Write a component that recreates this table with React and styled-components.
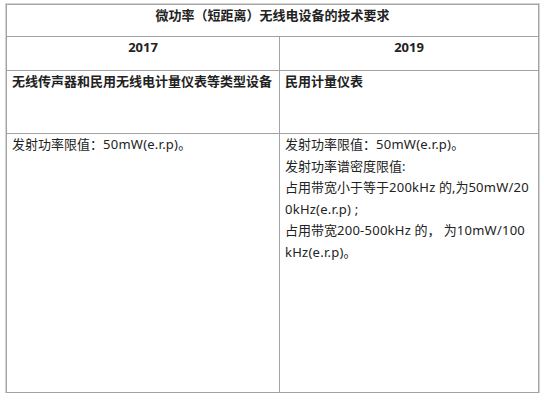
import React from "react";
import styled, { createGlobalStyle } from "styled-components";

const Global = createGlobalStyle`
  html, body { margin: 0; padding: 0; background: #fff; }
  body { font-family: "Noto Sans", "Noto Sans CJK SC", sans-serif; color: #222; }
`;

const Page = styled.div`
  padding: 4px 0 0 6px;
`;

const Table = styled.table`
  width: 532px;
  border-collapse: collapse;
  table-layout: fixed;
  border: 1px solid #8f8f8f;
  box-shadow: 0 0 0 1px #d4d4d4;
  font-size: 13px;
  line-height: 21.6px;
`;

const Row = styled.tr`
  height: ${(p) => p.$h}px;
`;

const Cell = styled.td`
  border: 1px solid #a3a3a3;
  padding: 0 5px;
  vertical-align: top;
  text-align: ${(p) => (p.$center ? "center" : "left")};
  font-weight: ${(p) => (p.$bold ? 700 : 400)};
`;

const Line = styled.div`
  white-space: nowrap;
`;

const Latin = styled.span`
  letter-spacing: 0.25px;
`;

export default function App() {
  return (
    <>
      <Global />
      <Page>
        <Table>
          <colgroup>
            <col style={{ width: "273px" }} />
            <col style={{ width: "259px" }} />
          </colgroup>
          <tbody>
            <Row $h={32}>
              <Cell colSpan={2} $center $bold>
                微功率（短距离）无线电设备的技术要求
              </Cell>
            </Row>
            <Row $h={34}>
              <Cell $center $bold>2017</Cell>
              <Cell $center $bold>2019</Cell>
            </Row>
            <Row $h={63}>
              <Cell $bold>无线传声器和民用无线电计量仪表等类型设备</Cell>
              <Cell $bold>民用计量仪表</Cell>
            </Row>
            <Row $h={259}>
              <Cell>
                <Line>发射功率限值：<Latin>50mW(e.r.p)</Latin>。</Line>
              </Cell>
              <Cell>
                <Line>发射功率限值：<Latin>50mW(e.r.p)</Latin>。</Line>
                <Line>发射功率谱密度限值:</Line>
                <Line>占用带宽小于等于<Latin>200kHz</Latin> 的,为<Latin>50mW/20</Latin></Line>
                <Line><Latin>0kHz(e.r.p)</Latin> ;</Line>
                <Line>占用带宽<Latin>200-500kHz</Latin> 的， 为<Latin>10mW/100</Latin></Line>
                <Line><Latin>kHz(e.r.p)</Latin>。</Line>
              </Cell>
            </Row>
          </tbody>
        </Table>
      </Page>
    </>
  );
}
